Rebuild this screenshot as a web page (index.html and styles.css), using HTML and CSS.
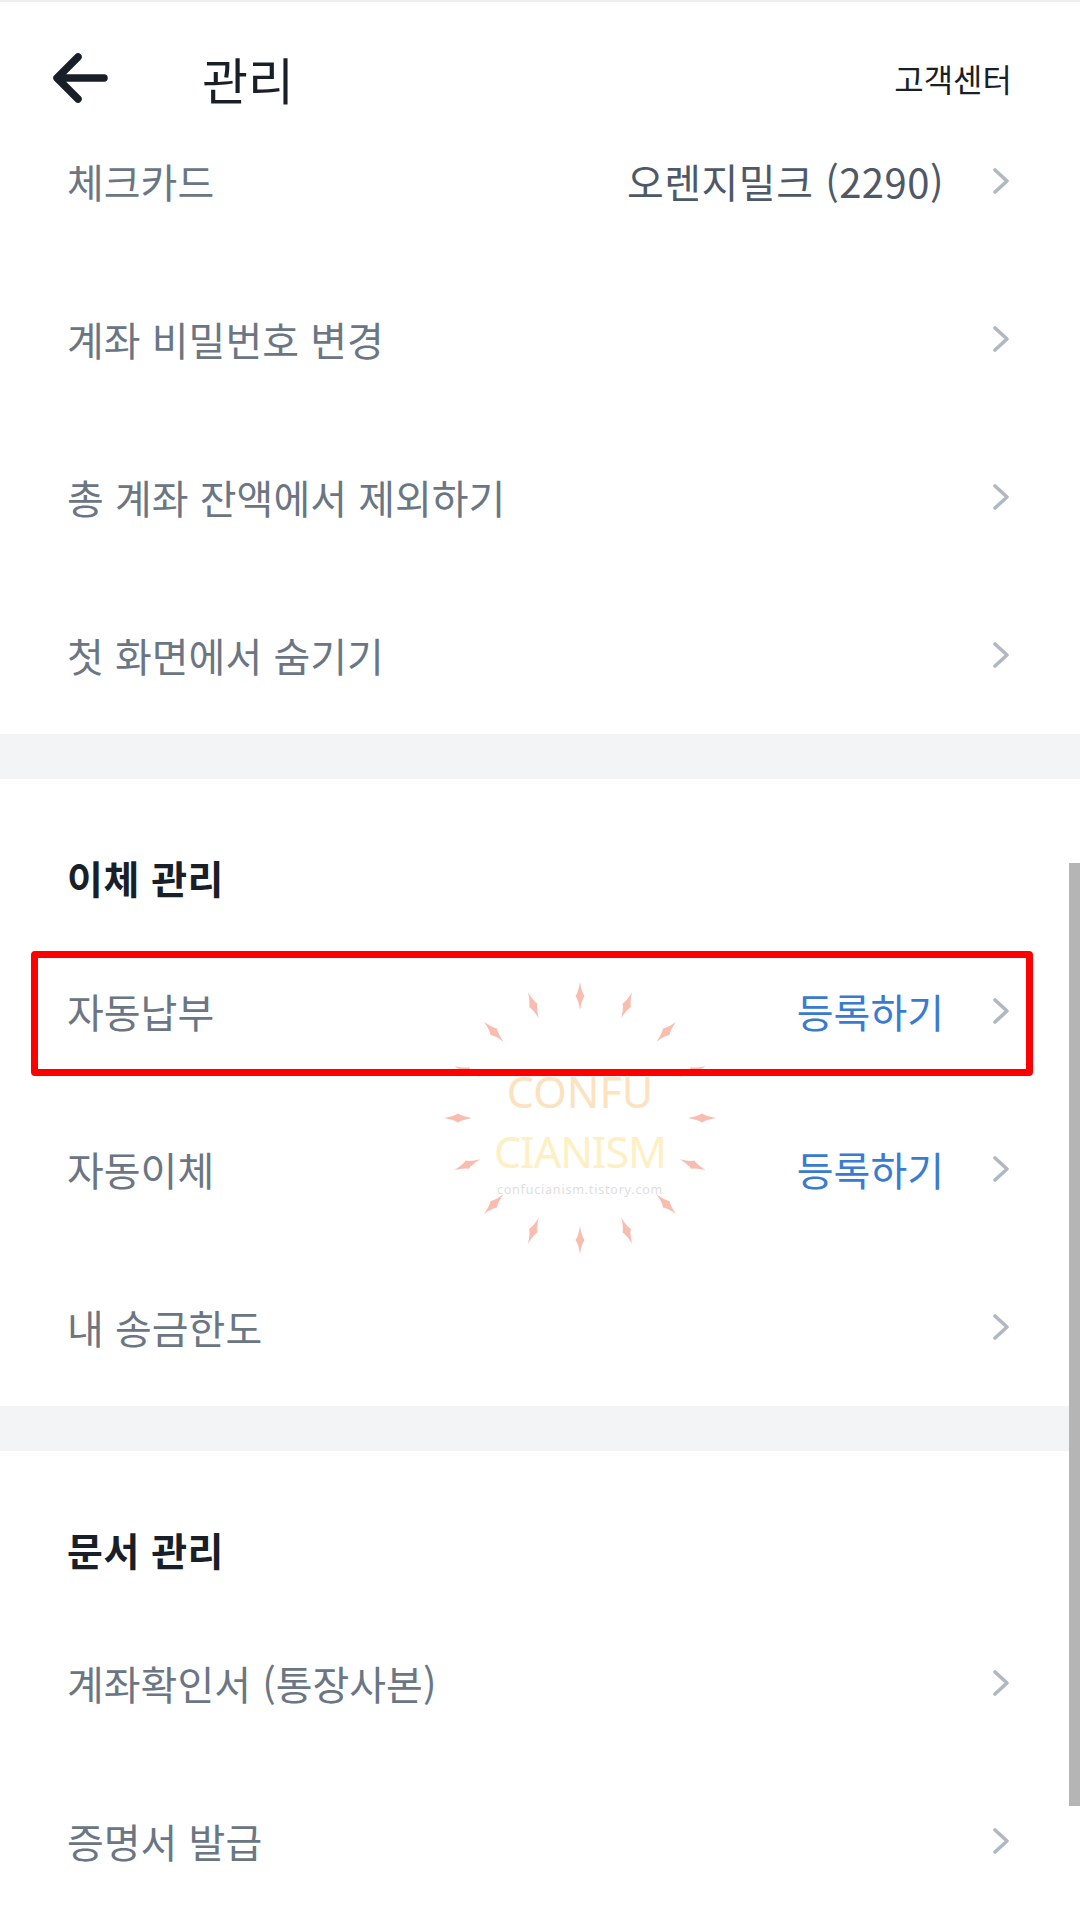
FILE: index.html
```html
<!DOCTYPE html>
<html lang="ko">
<head>
<meta charset="utf-8">
<title>관리</title>
<link rel="stylesheet" href="styles.css">
</head>
<body>
<div class="screen">
  <div class="topline"></div>
  <header class="appbar">
    <svg class="back" width="56" height="52" viewBox="0 0 56 52">
      <path d="M52 26 H6 M26 5 L5 26 L26 47" fill="none" stroke="#191f28" stroke-width="7.5" stroke-linecap="round" stroke-linejoin="round"/>
    </svg>
    <h1 class="title">관리</h1>
    <span class="help">고객센터</span>
  </header>

  <section class="group">
    <div class="row"><span class="label">체크카드</span><span class="value">오렌지밀크 (2290)</span><svg class="chev" viewBox="0 0 18 26"><path d="M3 2 L15 13 L3 24" fill="none" stroke="#b0b8c1" stroke-width="3.6" stroke-linecap="round" stroke-linejoin="round"/></svg></div>
    <div class="row"><span class="label">계좌 비밀번호 변경</span><svg class="chev" viewBox="0 0 18 26"><path d="M3 2 L15 13 L3 24" fill="none" stroke="#b0b8c1" stroke-width="3.6" stroke-linecap="round" stroke-linejoin="round"/></svg></div>
    <div class="row"><span class="label">총 계좌 잔액에서 제외하기</span><svg class="chev" viewBox="0 0 18 26"><path d="M3 2 L15 13 L3 24" fill="none" stroke="#b0b8c1" stroke-width="3.6" stroke-linecap="round" stroke-linejoin="round"/></svg></div>
    <div class="row"><span class="label">첫 화면에서 숨기기</span><svg class="chev" viewBox="0 0 18 26"><path d="M3 2 L15 13 L3 24" fill="none" stroke="#b0b8c1" stroke-width="3.6" stroke-linecap="round" stroke-linejoin="round"/></svg></div>
  </section>

  <div class="divider"></div>

  <section class="group">
    <h2 class="group-title">이체 관리</h2>
    <div class="row"><span class="label">자동납부</span><span class="value link">등록하기</span><svg class="chev" viewBox="0 0 18 26"><path d="M3 2 L15 13 L3 24" fill="none" stroke="#b0b8c1" stroke-width="3.6" stroke-linecap="round" stroke-linejoin="round"/></svg></div>
    <div class="row"><span class="label">자동이체</span><span class="value link">등록하기</span><svg class="chev" viewBox="0 0 18 26"><path d="M3 2 L15 13 L3 24" fill="none" stroke="#b0b8c1" stroke-width="3.6" stroke-linecap="round" stroke-linejoin="round"/></svg></div>
    <div class="row"><span class="label">내 송금한도</span><svg class="chev" viewBox="0 0 18 26"><path d="M3 2 L15 13 L3 24" fill="none" stroke="#b0b8c1" stroke-width="3.6" stroke-linecap="round" stroke-linejoin="round"/></svg></div>
  </section>

  <div class="divider"></div>

  <section class="group">
    <h2 class="group-title">문서 관리</h2>
    <div class="row"><span class="label">계좌확인서 (통장사본)</span><svg class="chev" viewBox="0 0 18 26"><path d="M3 2 L15 13 L3 24" fill="none" stroke="#b0b8c1" stroke-width="3.6" stroke-linecap="round" stroke-linejoin="round"/></svg></div>
    <div class="row"><span class="label">증명서 발급</span><svg class="chev" viewBox="0 0 18 26"><path d="M3 2 L15 13 L3 24" fill="none" stroke="#b0b8c1" stroke-width="3.6" stroke-linecap="round" stroke-linejoin="round"/></svg></div>
  </section>

  <div class="watermark">
    <svg class="ring" width="300" height="300" viewBox="-150 -150 300 300">
      <defs>
        <path id="dia" d="M0 -136 Q1.6 -126 4.5 -122 Q1.6 -118 0 -108 Q-1.6 -118 -4.5 -122 Q-1.6 -126 0 -136 Z"/>
      </defs>
      <g fill="#f9bdb0">
        <use href="#dia" transform="rotate(0)"/>
        <use href="#dia" transform="rotate(22.5)"/>
        <use href="#dia" transform="rotate(45)"/>
        <use href="#dia" transform="rotate(67.5)"/>
        <use href="#dia" transform="rotate(90)"/>
        <use href="#dia" transform="rotate(112.5)"/>
        <use href="#dia" transform="rotate(135)"/>
        <use href="#dia" transform="rotate(157.5)"/>
        <use href="#dia" transform="rotate(180)"/>
        <use href="#dia" transform="rotate(202.5)"/>
        <use href="#dia" transform="rotate(225)"/>
        <use href="#dia" transform="rotate(247.5)"/>
        <use href="#dia" transform="rotate(270)"/>
        <use href="#dia" transform="rotate(292.5)"/>
        <use href="#dia" transform="rotate(315)"/>
        <use href="#dia" transform="rotate(337.5)"/>
      </g>
    </svg>
    <div class="wm-text">
      <div class="wm-1">CONFU</div>
      <div class="wm-2">CIANISM</div>
      <div class="wm-3">confucianism.tistory.com</div>
    </div>
  </div>

  <div class="highlight"></div>
  <div class="scrollbar"></div>
</div>
</body>
</html>
```

FILE: styles.css
```css
* { box-sizing: border-box; margin: 0; padding: 0; }

html, body {
  width: 1080px;
  height: 1920px;
  background: #ffffff;
  overflow: hidden;
}

body {
  font-family: "Noto Sans CJK KR", "Noto Sans", sans-serif;
}

.screen {
  position: relative;
  width: 1080px;
  height: 1920px;
  overflow: hidden;
}

.topline {
  height: 2px;
  background: #eeeeee;
}

.appbar {
  height: 100px;
  display: flex;
  align-items: center;
  padding: 52px 68px 0 52px;
}

.back {
  display: block;
  width: 56px;
  height: 52px;
}

.title {
  margin-left: 94px;
  font-size: 50px;
  font-weight: 400;
  letter-spacing: 0;
  color: #191f28;
  line-height: 1;
}

.help {
  margin-left: auto;
  font-size: 32px;
  letter-spacing: 0;
  color: #191f28;
  line-height: 1;
}

.group {
  display: flex;
  flex-direction: column;
}

.row {
  height: 158px;
  display: flex;
  align-items: center;
  padding: 0 70px 0 67px;
}

.label {
  font-size: 40px;
  letter-spacing: 0;
  color: #6b7684;
  line-height: 1;
}

.value {
  margin-left: auto;
  font-size: 40px;
  letter-spacing: 0.5px;
  color: #4e5968;
  line-height: 1;
}

.value.link {
  color: #3a7bd2;
  letter-spacing: 0;
}

.chev {
  display: block;
  width: 18px;
  height: 26px;
  margin-left: auto;
}

.value + .chev {
  margin-left: 48px;
}

.divider {
  height: 45px;
  background: #f2f4f6;
}

.group-title {
  height: 153px;
  padding: 78px 0 0 67px;
  font-size: 39px;
  line-height: 40px;
  font-weight: 700;
  letter-spacing: 0.5px;
  color: #191f28;
}

/* annotation overlays */
.watermark {
  position: absolute;
  left: 430px;
  top: 968px;
  width: 300px;
  height: 300px;
}

.ring {
  position: absolute;
  left: 0;
  top: 0;
}

.wm-text {
  position: absolute;
  left: 0;
  top: 94px;
  width: 300px;
  text-align: center;
  font-family: "Noto Sans", sans-serif;
}

.wm-1 {
  font-size: 43px;
  line-height: 60px;
  color: #fde2bf;
}

.wm-2 {
  font-size: 43px;
  line-height: 60px;
  letter-spacing: -1px;
  color: #fff0c4;
}

.wm-3 {
  font-size: 12.5px;
  line-height: 16px;
  letter-spacing: 0.8px;
  color: #dedede;
}

.highlight {
  position: absolute;
  left: 31px;
  top: 951px;
  width: 1002px;
  height: 125px;
  border: 7px solid #ff0000;
  border-radius: 4px;
}

.scrollbar {
  position: absolute;
  left: 1069px;
  top: 863px;
  width: 11px;
  height: 943px;
  background: #b5b5b5;
}
```
